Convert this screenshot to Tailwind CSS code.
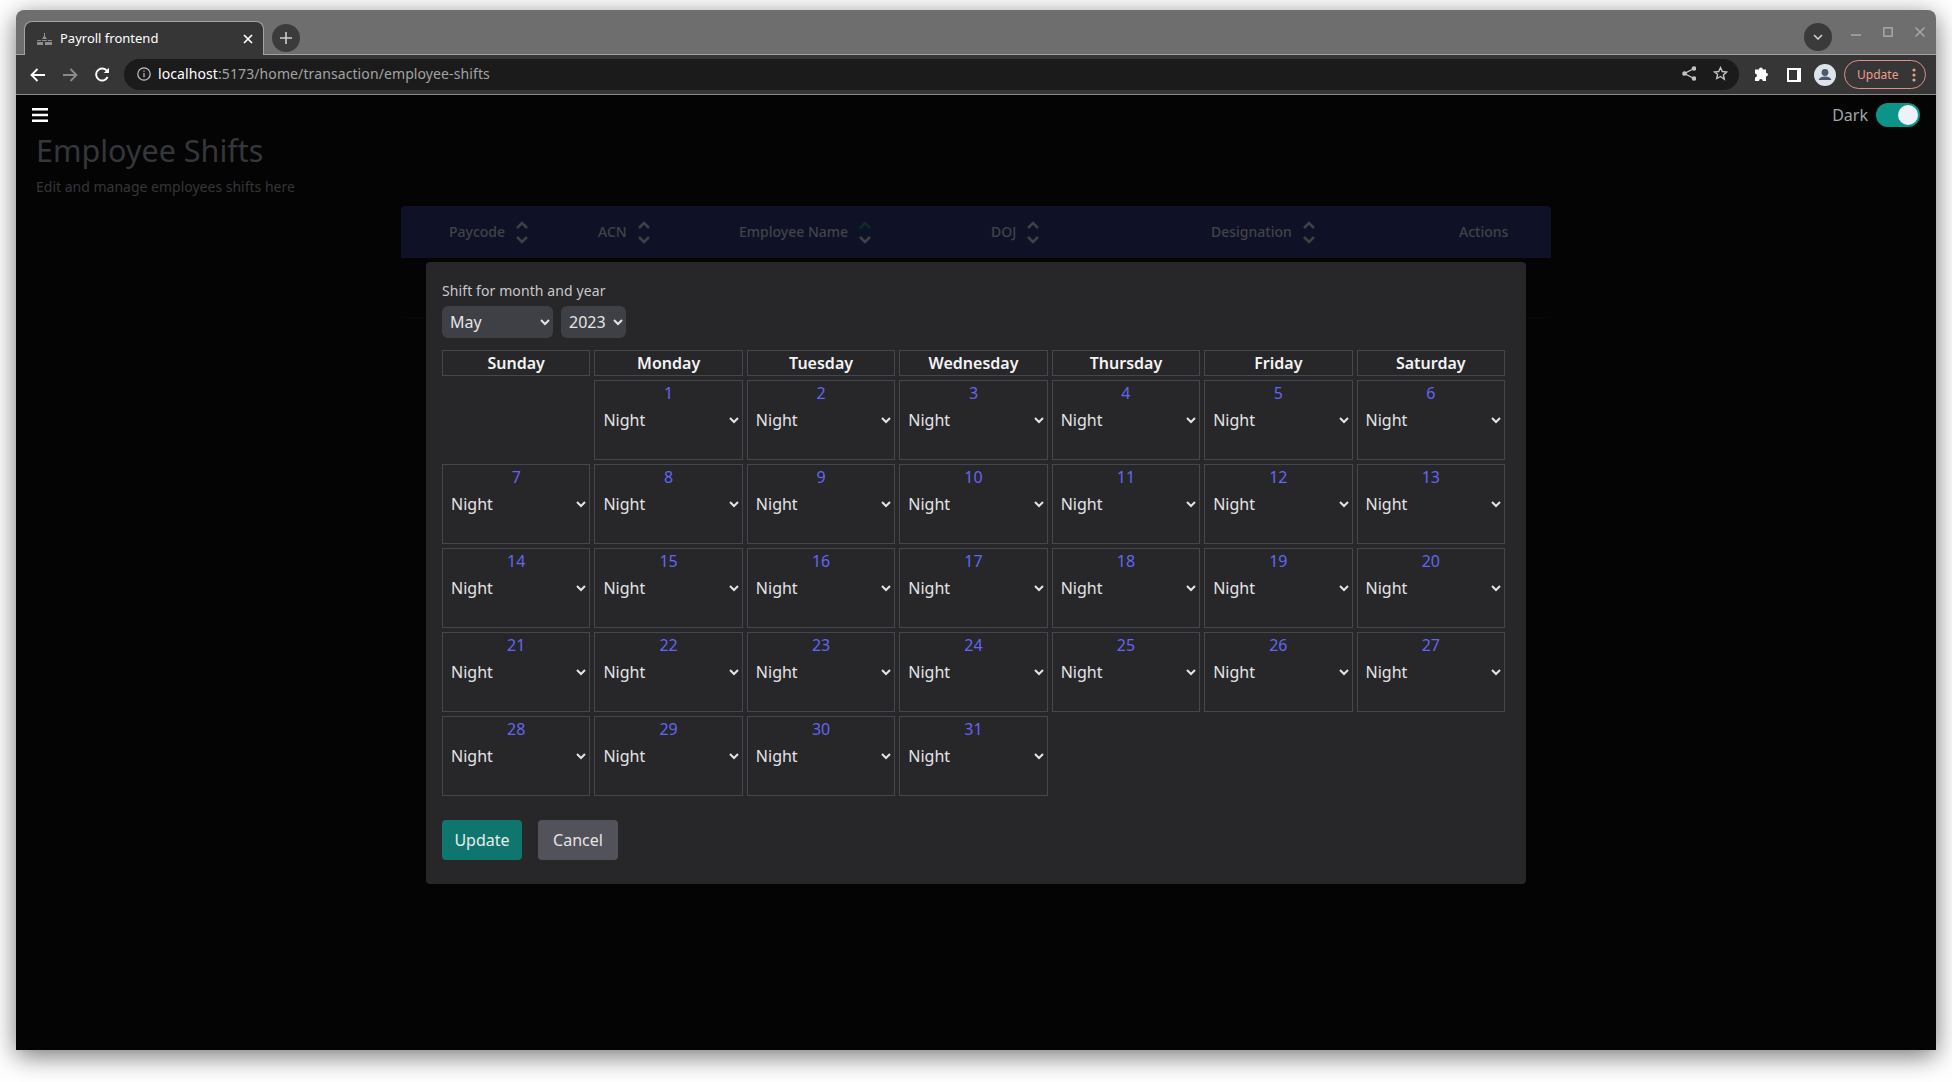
<!DOCTYPE html>
<html lang="en">
<head>
    <meta charset="UTF-8">
    <title>Payroll frontend</title>
    <script src="https://cdn.jsdelivr.net/npm/@tailwindcss/browser@4"></script>
</head>
<body class="bg-white h-[1082px] overflow-hidden pt-[10px] pl-4 font-['Noto_Sans',sans-serif]">

<div class="w-[1920px] h-[1040px] flex flex-col rounded-t-lg overflow-hidden shadow-[0_6px_26px_rgba(0,0,0,0.55)]">

    <!-- Tab strip -->
    <div class="h-[45px] shrink-0 bg-[#6e6e6e] border-b border-[#a3a3a3] flex items-end pl-2 relative">
        <div class="w-[240px] h-[34px] -mb-px bg-[#363636] rounded-t-lg border border-b-0 border-[#a3a3a3] flex items-center pl-[12px] pr-[10px] text-[13px] text-white">
            <svg class="w-[15px] h-[12px] mr-[8px]" viewBox="0 0 15 12" fill="#8f8f8f"><path d="M7 0h1v3l2 3H5l2-3zM0 7h4v1H0zM5 7h5v1H5zM11 7h4v1h-4zM0 9h6v3H0zM8 9h7v3H8z"/></svg>
            <span>Payroll frontend</span>
            <svg class="w-[10px] h-[10px] ml-auto" viewBox="0 0 10 10" stroke="white" stroke-width="1.7"><path d="M1 1l8 8M9 1l-8 8"/></svg>
        </div>
        <div class="w-7 h-7 rounded-full bg-[#3b3b3b] ml-2 mb-[2px] flex items-center justify-center">
            <svg class="w-[12px] h-[12px]" viewBox="0 0 12 12" stroke="#cfcfcf" stroke-width="1.6"><path d="M6 0v12M0 6h12"/></svg>
        </div>
        <div class="ml-auto flex items-center mb-[3px]">
            <div class="w-7 h-7 rounded-full bg-[#3a3a3a] flex items-center justify-center">
                <svg class="w-[10px] h-[6px]" viewBox="0 0 10 6" fill="none" stroke="#cfcfcf" stroke-width="1.6"><path d="M1 1l4 4 4-4"/></svg>
            </div>
            <div class="flex items-center gap-[22px] ml-[19px] mr-[11px] -mt-[11px]">
                <svg class="w-[10px] h-[10px]" viewBox="0 0 10 10" stroke="#a8a8a8" stroke-width="1.6"><path d="M0 8h10"/></svg>
                <svg class="w-[10px] h-[10px]" viewBox="0 0 10 10" fill="none" stroke="#a8a8a8" stroke-width="1.5"><rect x="0.8" y="0.8" width="8.4" height="8.4"/></svg>
                <svg class="w-[10px] h-[10px]" viewBox="0 0 10 10" stroke="#a8a8a8" stroke-width="1.5"><path d="M0.5 0.5l9 9M9.5 0.5l-9 9"/></svg>
            </div>
        </div>
    </div>

    <!-- Toolbar -->
    <div class="h-[40px] shrink-0 bg-[#363636] border-b border-[#8a8a8a] flex items-center pl-[14px] pr-[10px]">
        <svg class="w-[15px] h-[14px]" viewBox="0 0 15 14" fill="none" stroke="white" stroke-width="1.8"><path d="M15 7H2M7.5 1L1.5 7l6 6"/></svg>
        <svg class="w-[15px] h-[14px] ml-[18px]" viewBox="0 0 15 14" fill="none" stroke="#8a8a8a" stroke-width="1.8"><path d="M0 7h13M7.5 1l6 6-6 6"/></svg>
        <svg class="w-[15px] h-[15px] ml-[17px]" viewBox="0 0 15 15" fill="none" stroke="white" stroke-width="1.9"><path d="M12.6 10a6 6 0 1 1-.6-6"/><path d="M14 0.8v5.2H8.8z" fill="white" stroke="none"/></svg>
        <div class="w-[1617px] h-[31px] ml-[14px] bg-[#1b1b1b] rounded-full flex items-center pb-[2px] pl-[13px] pr-[11px] text-sm tracking-[0.1px]">
            <svg class="w-[14px] h-[14px]" viewBox="0 0 14 14" fill="none" stroke="#c4c4c4" stroke-width="1.2"><circle cx="7" cy="7" r="6.2"/><path d="M7 6v4.2M7 3.4v1.3"/></svg>
            <span class="ml-[7px] text-white">localhost</span><span class="text-[#a3a3a3]">:5173/home/transaction/employee-shifts</span>
            <svg class="w-[14px] h-[15px] ml-auto" viewBox="0 0 14 15" fill="none" stroke="#c4c4c4" stroke-width="1.4"><path d="M12 2.5L2.5 7.5 12 12.5"/><circle cx="12" cy="2.5" r="1.6" fill="#c4c4c4"/><circle cx="2.5" cy="7.5" r="1.6" fill="#c4c4c4"/><circle cx="12" cy="12.5" r="1.6" fill="#c4c4c4"/></svg>
            <svg class="w-[15px] h-[15px] ml-[17px]" viewBox="0 0 24 24" fill="none" stroke="#c4c4c4" stroke-width="2.2"><path d="M12 2.5l2.9 6.3 6.9.8-5.1 4.7 1.4 6.8L12 16.8 5.9 20.1l1.4-6.8L2.2 9.600l6.900-.8z"/></svg>
        </div>
        <svg class="w-[15px] h-[15px] ml-[15px]" viewBox="0 0 15 15" fill="white"><path d="M5 2.500a1.900 1.900 0 0 1 3.800 0H12v3.200a1.900 1.900 0 0 1 0 3.800V14H8.800a1.900 1.900 0 0 0-3.800 0H1v-3.600a1.900 1.900 0 0 0 0-3.800V2.500z"/></svg>
        <div class="w-[14px] h-[14px] ml-[18px] bg-white flex justify-start"><div class="w-[8px] h-[10px] mt-[2px] ml-[2px] bg-[#363636]"></div></div>
        <svg class="w-[22px] h-[22px] ml-[13px]" viewBox="0 0 22 22"><circle cx="11" cy="11" r="11" fill="#dfe3ea"/><circle cx="11" cy="8.500" r="3.400" fill="#4d5a6e"/><path d="M4.500 16c.8-2.600 3.500-3.600 6.500-3.600s5.700 1 6.500 3.600z" fill="#4d5a6e"/></svg>
        <div class="w-[82px] h-[29px] ml-[8px] rounded-full border border-[#e08f84] flex items-center pl-3 pr-[9px] text-xs text-[#f09a8c]">
            <span>Update</span>
            <svg class="w-[4px] h-[14px] ml-auto" viewBox="0 0 4 14" fill="#f09a8c"><circle cx="2" cy="2" r="1.600"/><circle cx="2" cy="7" r="1.600"/><circle cx="2" cy="12" r="1.600"/></svg>
        </div>
    </div>

    <!-- Page -->
    <div class="flex-1 bg-[#040404] relative">
        <div class="h-[40px] flex items-center justify-between pl-4 pr-4">
            <svg class="w-4 h-[14px]" viewBox="0 0 16 14" fill="white"><path d="M0 0h16v2.400H0zM0 5.800h16v2.400H0zM0 11.600h16v2.400H0z"/></svg>
            <div class="flex items-center gap-2 text-[#a1a4a9]">
                <span>Dark</span>
                <div class="w-11 h-6 rounded-full bg-[#0d9488] flex items-center justify-end pr-[2px]">
                    <div class="w-5 h-5 rounded-full bg-[#eef2f8]"></div>
                </div>
            </div>
        </div>
        <h1 class="pl-5 -mt-[3px] text-[30.5px] leading-[36px] text-[#34373b]">Employee Shifts</h1>
        <p class="pl-5 mt-[9px] text-sm leading-5 text-[#34363a]">Edit and manage employees shifts here</p>

        <!-- Table behind the dialog -->
        <div class="w-[1150px] ml-[385px] mt-[9px] rounded-b">
            <div class="h-[52px] bg-[#0f1126] rounded-t flex items-center pl-[48px] text-sm font-medium text-[#414349]" id="thead"></div>
            <div class="h-[60px] border-b border-[#090909] rounded-b"></div>
        </div>

        <!-- Dialog -->
        <div class="absolute left-[410px] top-[167px] w-[1100px] h-[622px] bg-[#27272a] rounded px-4 pt-[19px]">
            <div class="text-sm leading-5 text-[#c8c9cc] tracking-[0.1px]">Shift for month and year</div>
            <div class="flex gap-2 mt-[5px]">
                <select class="scheme-dark w-[111px] h-8 bg-[#3f4046] rounded-md px-1 text-[#e4e4e7]"><option>May</option></select>
                <select class="scheme-dark w-[65px] h-8 bg-[#3f4046] rounded-md px-1 text-[#e4e4e7]"><option>2023</option></select>
            </div>
            <div class="w-[1063px] mt-3 grid grid-cols-7 gap-1" id="cal"></div>
            <div class="flex gap-4 mt-6">
                <button class="w-[80px] h-10 rounded bg-[#0f766e] text-[#e9ecec]">Update</button>
                <button class="w-[80px] h-10 rounded bg-[#52525b] text-[#e4e4e7]">Cancel</button>
            </div>
        </div>
    </div>
</div>

<script>
    // table header columns: label, column width, colour of the up chevron
    const columns = [
        ['Paycode', 'w-[149px]', '#3e4045'],
        ['ACN', 'w-[141px]', '#3e4045'],
        ['Employee Name', 'w-[252px]', '#0e2a2a'],
        ['DOJ', 'w-[220px]', '#3e4045'],
        ['Designation', 'w-[248px]', '#3e4045'],
    ];
    const thead = document.getElementById('thead');
    columns.forEach(([label, width, up]) => {
        thead.insertAdjacentHTML('beforeend', `<div class="${width} flex items-center gap-[11px]"><span>${label}</span>
            <svg class="w-3 h-[23px]" viewBox="0 0 12 23" fill="none" stroke-width="2.500"><path d="M1 7l5-5 5 5" stroke="${up}"/><path d="M1 16l5 5 5-5" stroke="#3e4045"/></svg></div>`);
    });
    thead.insertAdjacentHTML('beforeend', '<span>Actions</span>');

    const cal = document.getElementById('cal');
    ['Sunday', 'Monday', 'Tuesday', 'Wednesday', 'Thursday', 'Friday', 'Saturday'].forEach(d => {
        cal.insertAdjacentHTML('beforeend', `<div class="h-[26px] border border-[#45474f] text-center font-semibold leading-[24px] text-[#f4f4f5]">${d}</div>`);
    });
    cal.insertAdjacentHTML('beforeend', '<div class="h-[80px]"></div>');
    for (let day = 1; day <= 31; day++) {
        cal.insertAdjacentHTML('beforeend', `<div class="h-[80px] border border-[#45474f] text-center">
            <div class="h-6 leading-6 text-[#6366f1]">${day}</div>
            <select class="scheme-dark w-full h-[30px] px-1 bg-transparent text-[#e4e4e7]"><option>Night</option></select></div>`);
    }
</script>
</body>
</html>
